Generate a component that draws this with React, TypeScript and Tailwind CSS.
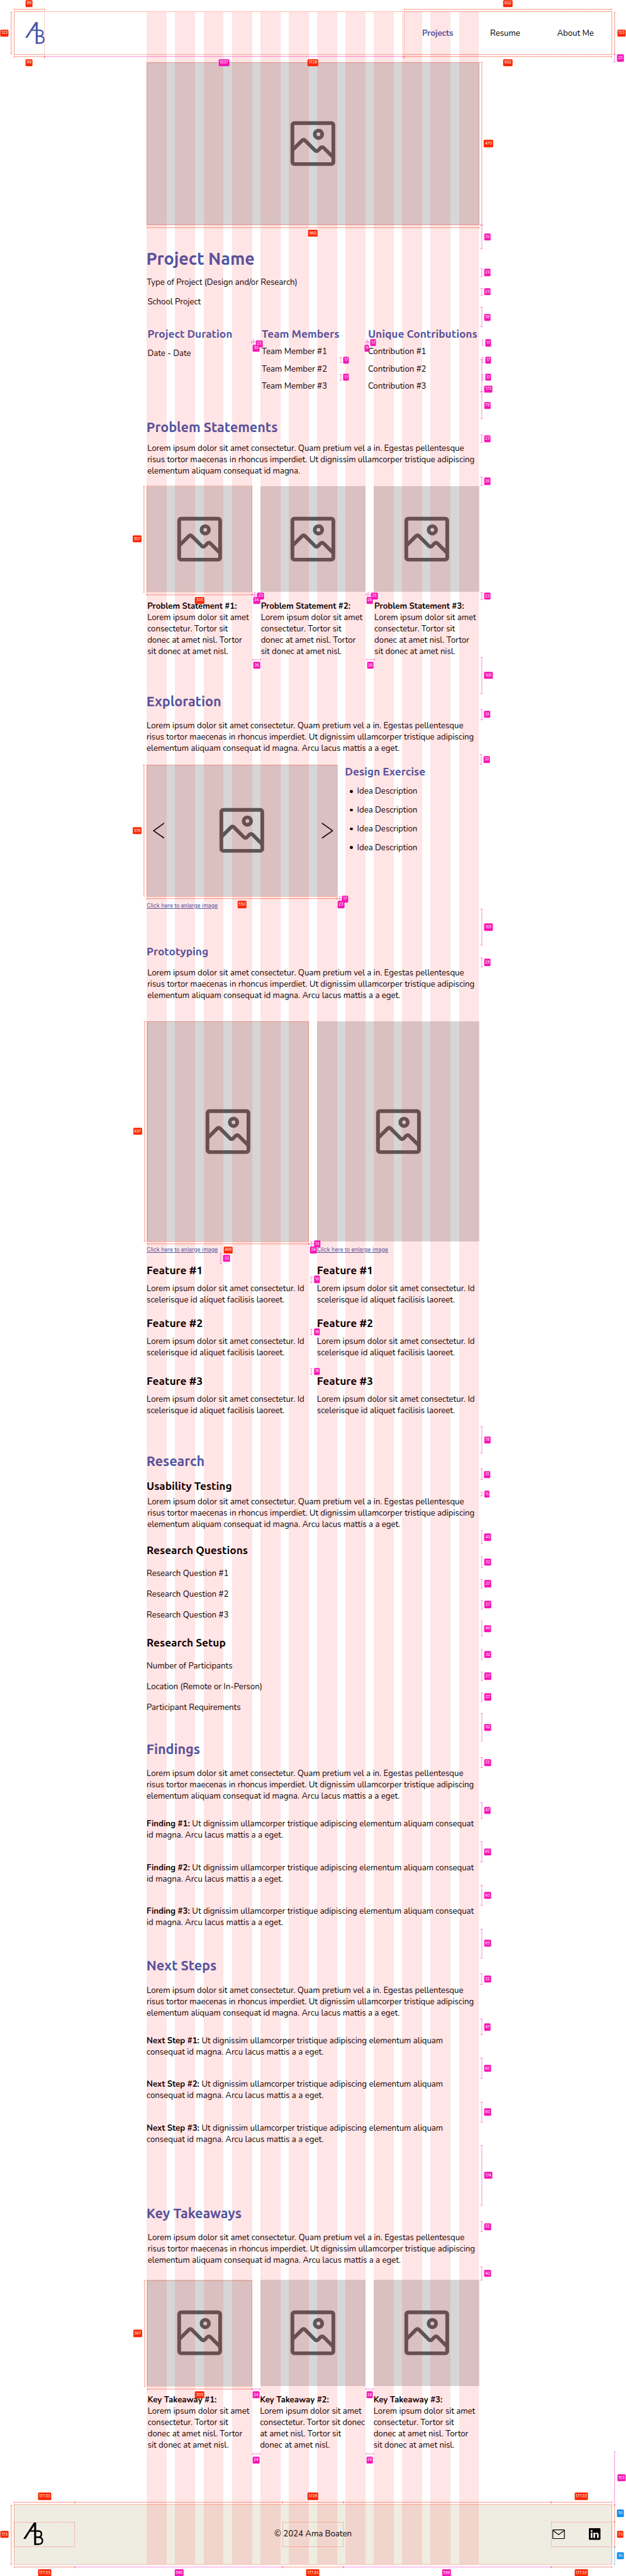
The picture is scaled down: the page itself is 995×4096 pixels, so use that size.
import type { ReactNode } from "react";
import { BsLinkedin } from "react-icons/bs";

const INTRO = [
  "Lorem ipsum dolor sit amet consectetur. Quam pretium vel a in. Egestas pellentesque",
  "risus tortor maecenas in rhoncus imperdiet. Ut dignissim ullamcorper tristique adipiscing",
  "elementum aliquam consequat id magna. Arcu lacus mattis a a eget.",
];
const INTRO_SHORT = [INTRO[0], INTRO[1], "elementum aliquam consequat id magna."];
const CARD = ["Lorem ipsum dolor sit amet", "consectetur. Tortor sit", "donec at amet nisl. Tortor", "sit donec at amet nisl."];
const CARD_WIDE = ["Lorem ipsum dolor sit amet", "consectetur. Tortor sit donec", "at amet nisl. Tortor sit", "donec at amet nisl."];

type Tone = "red" | "pink" | "blue";
const LINE: Record<Tone, string> = { red: "bg-[#f92500]/50", pink: "bg-[#f715b5]/50", blue: "bg-[#0d8ce9]/50" };
const FILL: Record<Tone, string> = { red: "bg-[#fa2600]", pink: "bg-[#f715b5]", blue: "bg-[#0d8ce9]" };

const u = (n: number) => `calc(var(--spacing) * ${n})`;

// [tone, x, top, bottom]
const VERTICAL: [Tone, number, number, number][] = [
  ["red", 32, 34, 157], ["red", 1775, 34, 157], ["pink", 1775, 157, 180],
  ["red", 1391, 180, 650], ["pink", 1391, 650, 720], ["pink", 1391, 775.5, 799], ["pink", 1391, 831.5, 855],
  ["pink", 1391, 887.5, 945.5], ["pink", 1394, 982, 999.5], ["pink", 1394, 1032, 1049], ["pink", 1394, 1082, 1099],
  ["pink", 1391, 1038, 1132], ["pink", 1391, 1132, 1211], ["pink", 1391, 1255.5, 1279], ["pink", 1391, 1377.5, 1403.5],
  ["pink", 731.6, 982, 1005], ["pink", 1061.5, 982, 999], ["pink", 984, 1032, 1049], ["pink", 984, 1082, 1099],
  ["red", 416.5, 1404, 1711], ["pink", 735.6, 1711, 1734], ["pink", 1063.6, 1711, 1734], ["pink", 1391, 1711, 1734],
  ["pink", 1391, 1899, 2004], ["pink", 1391, 2049, 2080], ["pink", 1389, 2178.5, 2210.5],
  ["red", 416.5, 2210.5, 2590], ["pink", 981, 2590, 2607], ["pink", 1391, 2626, 2731], ["pink", 1391, 2767, 2795],
  ["red", 418.5, 2951, 3588], ["pink", 900, 3588, 3601], ["pink", 637.6, 3620, 3652.5],
  ["pink", 898.6, 3688, 3706.5], ["pink", 898.6, 3839.5, 3858.5], ["pink", 898.6, 3953.5, 3972.5],
  ["pink", 1391, 4121.5, 4200], ["pink", 1391, 4244, 4276.5], ["pink", 1391, 4311, 4323.5],
  ["pink", 1392, 4421.5, 4462], ["pink", 1392, 4497.5, 4530], ["pink", 1392, 4563, 4590], ["pink", 1392, 4622.5, 4650],
  ["pink", 1392, 4682.5, 4729], ["pink", 1392, 4764.5, 4796.5], ["pink", 1392, 4830, 4857], ["pink", 1392, 4890, 4917],
  ["pink", 1392, 4949.5, 5032], ["pink", 1391, 5076.5, 5109], ["pink", 1391, 5207.5, 5254.5], ["pink", 1391, 5321, 5381],
  ["pink", 1391, 5446.5, 5507], ["pink", 1391, 5573, 5658], ["pink", 1391, 5702.5, 5735], ["pink", 1391, 5833.5, 5881],
  ["pink", 1391, 5946.5, 6006.5], ["pink", 1391, 6072.5, 6132.5], ["pink", 1391, 6198.5, 6373], ["pink", 1391, 6418, 6450],
  ["pink", 1391, 6549, 6589], ["red", 418, 6589, 6896], ["pink", 1775, 7084, 7237],
  ["red", 32, 7237, 7410], ["red", 1775, 7237, 7287], ["red", 1775, 7287, 7360], ["blue", 1775, 7360, 7410],
];

// [tone, y, left, right]
const HORIZONTAL: [Tone, number, number, number][] = [
  ["red", 27, 40, 129], ["red", 27, 1166, 1768],
  ["red", 164, 40, 129], ["pink", 164, 129, 1166], ["red", 164, 1166, 1768],
  ["red", 657, 424, 1384],
  ["pink", 989, 725, 755], ["pink", 989, 1055, 1064],
  ["red", 1718, 424, 729], ["pink", 1718, 729, 753], ["pink", 1718, 1056, 1080],
  ["pink", 1906, 729, 755], ["pink", 1906, 1057, 1083],
  ["red", 2596.5, 424, 974.5], ["pink", 2596.5, 974.5, 998],
  ["red", 3594.5, 425, 893], ["pink", 3594.5, 893, 916],
  ["red", 6903, 425, 728], ["pink", 6903, 728, 752], ["pink", 6903, 1056, 1080],
  ["pink", 7091, 728, 752], ["pink", 7091, 1056, 1080],
  ["red", 7230, 40, 217], ["red", 7230, 217, 815.5], ["red", 7230, 815.5, 992], ["red", 7230, 992, 1591], ["red", 7230, 1591, 1768],
  ["red", 7417, 40, 217], ["pink", 7417, 217, 815.5], ["red", 7417, 815.5, 992], ["pink", 7417, 992, 1591], ["red", 7417, 1591, 1768],
];

// [tone, centre x, centre y, label]
const BADGES: [Tone, number, number, string][] = [
  ["red", 84, 10, "89"], ["red", 1467, 10, "602"], ["red", 13, 95.5, "123"], ["red", 84, 181, "89"], ["pink", 647, 181, "1037"],
  ["red", 904, 181, "1728"], ["red", 1467, 181, "602"], ["red", 1795, 95.5, "123"], ["pink", 1792, 168, "23"],
  ["red", 1411, 415, "470"], ["pink", 1407.7, 685.5, "70"], ["red", 904, 674, "960"],
  ["pink", 1407.7, 787.5, "23"], ["pink", 1407.7, 843.5, "23"], ["pink", 1407.7, 917, "58"],
  ["pink", 1410, 991, "17"], ["pink", 1410, 1040.5, "17"], ["pink", 1410, 1090.5, "17"], ["pink", 1410.5, 1124.5, "173"],
  ["pink", 1407.7, 1171.5, "79"], ["pink", 1407.7, 1267.5, "23"], ["pink", 1407.7, 1391, "26"],
  ["pink", 748.5, 993.5, "23"], ["pink", 740, 1006, "30"], ["pink", 1078, 990.5, "17"], ["pink", 1059.5, 1006, "9"],
  ["pink", 1000, 1040.5, "17"], ["pink", 1000, 1090.5, "17"],
  ["red", 396, 1557.5, "307"], ["red", 576.8, 1735, "305"], ["pink", 753, 1722, "23"], ["pink", 741, 1735, "24"],
  ["pink", 1081, 1722, "23"], ["pink", 1067.6, 1735, "24"], ["pink", 1407.7, 1722.5, "23"],
  ["pink", 741.7, 1923, "26"], ["pink", 1069.7, 1923, "26"], ["pink", 1411, 1951.5, "105"], ["pink", 1407, 2064.5, "31"],
  ["pink", 1406, 2194.5, "32"], ["red", 396, 2400.5, "379"], ["red", 699, 2614, "550"], ["pink", 996.6, 2598, "17"], ["pink", 985, 2614, "23"],
  ["pink", 1411, 2679, "105"], ["pink", 1407.7, 2781, "28"],
  ["red", 397.6, 3269.5, "637"], ["red", 659, 3612, "468"], ["pink", 916, 3594.5, "13"], ["pink", 905.4, 3612, "24"],
  ["pink", 655, 3636, "32"], ["pink", 915.5, 3697, "18"], ["pink", 915.5, 3849, "18"], ["pink", 915.5, 3963, "18"],
  ["pink", 1407.7, 4161, "78"], ["pink", 1407, 4260.5, "31"], ["pink", 1406.4, 4317.5, "11"],
  ["pink", 1409, 4442, "40"], ["pink", 1409, 4514, "32"], ["pink", 1409, 4576.5, "27"], ["pink", 1409, 4636.5, "27"],
  ["pink", 1409, 4706, "46"], ["pink", 1409, 4781, "32"], ["pink", 1409, 4843.5, "27"], ["pink", 1409, 4903.5, "27"],
  ["pink", 1409, 4991, "82"], ["pink", 1408, 5093, "32"], ["pink", 1408, 5231, "47"], ["pink", 1408, 5351, "60"],
  ["pink", 1408, 5477, "60"], ["pink", 1408, 5615.5, "85"], ["pink", 1408, 5719, "32"], ["pink", 1408, 5857.5, "47"],
  ["pink", 1408, 5977, "60"], ["pink", 1408, 6103, "60"], ["pink", 1410.5, 6286, "174"], ["pink", 1408, 6434, "32"], ["pink", 1408, 6569, "40"],
  ["red", 397.6, 6742.5, "307"], ["red", 576.8, 6920, "303"], ["pink", 739.7, 6920, "24"], ["pink", 1067.6, 6920, "24"],
  ["pink", 739.7, 7108, "24"], ["pink", 1067.6, 7108, "24"], ["pink", 1795, 7160, "153"],
  ["red", 129, 7213, "177.33"], ["red", 904, 7213, "1728"], ["red", 1679, 7213, "177.33"],
  ["red", 13, 7323.5, "173"], ["blue", 1792, 7262, "50"], ["red", 1792, 7323.5, "73"], ["blue", 1792, 7385, "50"],
  ["red", 129, 7434, "177.33"], ["pink", 517, 7434, "598"], ["red", 904, 7434, "177.33"], ["pink", 1290, 7434, "598"], ["red", 1679, 7434, "177.33"],
];

// [dotted, left, top, right, bottom]
const OUTLINES: [boolean, number, number, number, number][] = [
  [false, 40, 34, 1768, 157], [true, 40, 34, 129, 157], [true, 1166, 34, 1768, 157],
  [false, 424, 180, 1384, 650], [true, 424, 1404, 729, 1711], [false, 424, 2210, 975, 2590],
  [false, 425, 2951, 893, 3588], [true, 425, 6589, 728, 6896],
  [false, 40, 7237, 1768, 7410], [true, 40, 7287, 217, 7360], [true, 815.5, 7287, 992, 7360], [true, 1591, 7287, 1768, 7360],
];

function Measurements() {
  return (
    <div className="pointer-events-none absolute inset-0">
      {OUTLINES.map(([dotted, l, t, r, b], i) => (
        <div
          key={i}
          className={dotted ? "absolute border border-dotted border-[#f92500]/45" : "absolute border border-[#f92500]/30"}
          style={{ left: u(l), top: u(t - 0.5), width: u(r - l), height: u(b - t + 1) }}
        />
      ))}
      {VERTICAL.map(([tone, x, a, b], i) => (
        <div key={i} className="absolute flex w-6 -translate-x-1/2 flex-col items-center" style={{ left: u(x), top: u(a), height: u(b - a) }}>
          <div className={`h-px w-full ${LINE[tone]}`} />
          <div className={`w-px grow ${LINE[tone]}`} />
          <div className={`h-px w-full ${LINE[tone]}`} />
        </div>
      ))}
      {HORIZONTAL.map(([tone, y, a, b], i) => (
        <div key={i} className="absolute flex h-6 -translate-y-1/2 items-center" style={{ top: u(y), left: u(a), width: u(b - a) }}>
          <div className={`h-full w-px ${LINE[tone]}`} />
          <div className={`h-px grow ${LINE[tone]}`} />
          <div className={`h-full w-px ${LINE[tone]}`} />
        </div>
      ))}
      {BADGES.map(([tone, x, y, label], i) => (
        <div
          key={i}
          className={`absolute flex h-20.5 -translate-x-1/2 -translate-y-1/2 items-center justify-center rounded-[1.5px] px-3 font-[Inter,sans-serif] text-[6.05px] leading-none text-white ${FILL[tone]}`}
          style={{ left: u(x), top: u(y) }}
        >
          {label}
        </div>
      ))}
    </div>
  );
}

function ColumnGrid() {
  return (
    <div className="pointer-events-none absolute top-34 bottom-34 left-424 flex w-960 gap-24">
      {Array.from({ length: 12 }, (_, i) => (
        <div key={i} className="w-58 bg-[#ff0000]/10" />
      ))}
    </div>
  );
}

function Logo({ className }: { className: string }) {
  return (
    <svg viewBox="0 0 170 189" preserveAspectRatio="none" className={className}>
      <path fill="currentColor" fillRule="evenodd" d="M90 0H109V189H92V77H57L20 137H0ZM92 28L66 65H92Z" />
      <path fill="none" stroke="currentColor" strokeWidth="13" d="M104 71.5H124C146 71.5 154 82 154 96C154 111 144 123 122 123H104M122 123C152 123 162.500 138 162.500 153C162.500 172 148 182.500 128 182.500H104" />
    </svg>
  );
}

function Picture({ className, children }: { className: string; children?: ReactNode }) {
  return (
    <div className={`relative flex items-center justify-center bg-[#d6d6d6] ${className}`}>
      <svg viewBox="0 0 24 24" className="size-172" fill="none" stroke="#585858" strokeWidth="1.5">
        <rect x="3.75" y="3.75" width="16.5" height="16.5" rx="0.75" />
        <circle cx="14.25" cy="8.25" r="1.5" />
        <path d="M3.75 14.65L7.72 10.68a.75.75 0 0 1 1.06 0L12.94 14.84a.75.75 0 0 0 1.06 0L15.2 13.63a.75.75 0 0 1 1.06 0L20.25 17.62" />
      </svg>
      {children}
    </div>
  );
}

function Text({ lines, lead, className = "" }: { lines: string[]; lead?: string; className?: string }) {
  return (
    <p className={`whitespace-nowrap ${className}`}>
      {lines.map((line, i) => (
        <span key={i} className="block">
          {i === 0 && lead ? <b className="font-bold">{lead} </b> : null}
          {line}
        </span>
      ))}
    </p>
  );
}

function H2({ className, children }: { className: string; children: string }) {
  return <h2 className={`-ml-1 font-[Ubuntu,sans-serif] text-[21.6px] leading-45 font-bold whitespace-nowrap text-[#4a59a9] ${className}`}>{children}</h2>;
}

function H3({ className = "", dark = false, children }: { className?: string; dark?: boolean; children: string }) {
  return (
    <h3 className={`font-[Ubuntu,sans-serif] text-[17.3px] leading-36 font-bold whitespace-nowrap ${dark ? "text-black" : "text-[#4a59a9]"} ${className}`}>
      {children}
    </h3>
  );
}

function EnlargeLink({ className }: { className: string }) {
  return (
    <a className={`block w-fit font-[Inter,sans-serif] text-[8.75px] leading-19.25 whitespace-nowrap text-[#4a59a9] underline decoration-[1px] underline-offset-[1px] ${className}`}>
      Click here to enlarge image
    </a>
  );
}

function Card({ title, lines, width, inset }: { title: string; lines: string[]; width: string; inset: string }) {
  return (
    <div className={width}>
      <Picture className="h-307 w-full" />
      <div className={`mt-24 ${inset}`}>
        <b className="block font-bold whitespace-nowrap">{title}</b>
        <Text lines={lines} />
      </div>
    </div>
  );
}

function Prototype() {
  return (
    <div className="w-468">
      <Picture className="h-637 w-full" />
      <EnlargeLink className="mt-13.5" />
      {["mt-32.25", "mt-33", "mt-48.5"].map((gap, i) => (
        <div key={gap} className={`-ml-0.5 ${gap}`}>
          <H3 dark>{`Feature #${i + 1}`}</H3>
          <Text className="mt-18" lines={["Lorem ipsum dolor sit amet consectetur. Id", "scelerisque id aliquet facilisis laoreet."]} />
        </div>
      ))}
    </div>
  );
}

export default function App() {
  return (
    <div className="relative h-[4096px] w-[995px] overflow-hidden bg-white font-[Nunito,sans-serif] text-[13.2px] leading-32.75 text-black [--spacing:0.5503px]">
      <header className="mx-40 mt-34 flex h-123 justify-between">
        <div className="flex items-center pl-32.5">
          <Logo className="h-63 w-56.5 text-[#4a59a9]" />
        </div>
        <nav className="flex w-602 items-center justify-between px-53">
          <a className="font-bold text-[#4a59a9]">Projects</a>
          <a>Resume</a>
          <a>About Me</a>
        </nav>
      </header>

      <main className="mt-23 ml-424 w-960">
        <Picture className="h-470 w-full" />
        <h1 className="mt-70.5 -ml-1.5 font-[Ubuntu,sans-serif] text-[27px] leading-56 font-bold whitespace-nowrap text-[#4a59a9]">Project Name</h1>
        <p className="mt-23">Type of Project (Design and/or Research)</p>
        <p className="mt-23.25 ml-2">School Project</p>

        <div className="mt-58.25 flex h-186 pl-2">
          <div className="w-330">
            <H3>Project Duration</H3>
            <p className="mt-23">Date - Date</p>
          </div>
          <div className="w-307">
            <H3>Team Members</H3>
            {[1, 2, 3].map((n) => <p key={n} className="mt-17.25">Team Member #{n}</p>)}
          </div>
          <div>
            <H3>Unique Contributions</H3>
            {[1, 2, 3].map((n) => <p key={n} className="mt-17.25">Contribution #{n}</p>)}
          </div>
        </div>

        <H2 className="mt-79">Problem Statements</H2>
        <Text className="mt-23 ml-1.5" lines={INTRO_SHORT} />
        <div className="mt-26.25 flex justify-between">
          <Card title="Problem Statement #1:" lines={CARD} width="w-305" inset="pl-1.5" />
          <Card title="Problem Statement #2:" lines={CARD} width="w-304" inset="pl-1" />
          <Card title="Problem Statement #3:" lines={CARD} width="w-304" inset="pl-1.5" />
        </div>

        <H2 className="mt-105.75">Exploration</H2>
        <Text className="mt-31 -ml-0.5" lines={INTRO} />
        <div className="mt-31.75 flex gap-24">
          <div className="w-550.5">
            <Picture className="h-379.5 w-full">
              <svg viewBox="0 0 34 46" className="absolute left-17 h-46 w-34" fill="none" stroke="#000" strokeWidth="3" strokeLinecap="round" strokeLinejoin="round">
                <path d="M32 2L2 23.500L31.500 44" />
              </svg>
              <svg viewBox="0 0 34 46" className="absolute right-12 h-46 w-34" fill="none" stroke="#000" strokeWidth="3" strokeLinecap="round" strokeLinejoin="round">
                <path d="M2 2L32 23.500L2.500 44" />
              </svg>
            </Picture>
            <EnlargeLink className="mt-17.5" />
          </div>
          <div className="pt-1.5">
            <H3 className="-ml-2">Design Exercise</H3>
            <ul className="mt-22.5 ml-12.5 flex flex-col gap-21.5">
              {[0, 1, 2, 3].map((n) => (
                <li key={n} className="flex items-center gap-12">
                  <span className="size-8.5 rounded-full bg-black" />
                  Idea Description
                </li>
              ))}
            </ul>
          </div>
        </div>

        <H3 className="mt-105 -ml-0.5">Prototyping</H3>
        <Text className="mt-27.75 ml-1.5" lines={INTRO} />
        <div className="mt-57.25 flex justify-between">
          <Prototype />
          <Prototype />
        </div>

        <H2 className="mt-107.5">Research</H2>
        <H3 dark className="mt-31 -ml-0.5">Usability Testing</H3>
        <Text className="mt-11.5 ml-1.5" lines={INTRO} />
        <H3 dark className="mt-40.25 -ml-0.5">Research Questions</H3>
        <div className="mt-32 -ml-0.5 flex flex-col gap-27.25">
          {[1, 2, 3].map((n) => <p key={n}>Research Question #{n}</p>)}
        </div>
        <H3 dark className="mt-46.25 -ml-0.5">Research Setup</H3>
        <div className="mt-32 -ml-0.5 flex flex-col gap-27.25">
          <p>Number of Participants</p>
          <p>Location (Remote or In-Person)</p>
          <p>Participant Requirements</p>
        </div>

        <H2 className="mt-82.25">Findings</H2>
        <Text className="mt-32 -ml-0.5" lines={INTRO} />
        <div className="mt-47.25 -ml-0.5 flex flex-col gap-60.75">
          {[1, 2, 3].map((n) => (
            <Text key={n} lead={`Finding #${n}:`} lines={["Ut dignissim ullamcorper tristique adipiscing elementum aliquam consequat", "id magna. Arcu lacus mattis a a eget."]} />
          ))}
        </div>

        <H2 className="mt-85.5">Next Steps</H2>
        <Text className="mt-32 -ml-0.5" lines={INTRO} />
        <div className="mt-47.75 -ml-0.5 flex flex-col gap-60.75">
          {[1, 2, 3].map((n) => (
            <Text key={n} lead={`Next Step #${n}:`} lines={["Ut dignissim ullamcorper tristique adipiscing elementum aliquam", "consequat id magna. Arcu lacus mattis a a eget."]} />
          ))}
        </div>

        <H2 className="mt-174">Key Takeaways</H2>
        <Text className="mt-32 ml-2.75" lines={INTRO} />
        <div className="mt-40.25 flex justify-between">
          <Card title="Key Takeaway #1:" lines={CARD} width="w-304" inset="pl-2.5" />
          <Card title="Key Takeaway #2:" lines={CARD_WIDE} width="w-304" inset="-ml-1.25" />
          <Card title="Key Takeaway #3:" lines={CARD} width="w-304" inset="-ml-1.25" />
        </div>
      </main>

      <footer className="mx-40 mt-153.25 grid h-173 grid-cols-3 items-center bg-[#efece2]">
        <div className="pl-27">
          <Logo className="h-65 w-58 text-black" />
        </div>
        <p className="text-center">© 2024 Ama Boaten</p>
        <div className="flex items-center justify-end gap-70 pr-33">
          <svg viewBox="0 0 36 28" className="h-28 w-36" fill="none" stroke="#000" strokeWidth="2.200">
            <rect x="1.25" y="1.25" width="33.500" height="25.500" rx="1.500" />
            <path d="M2 3L18 15L34 3" />
          </svg>
          <BsLinkedin className="size-33.5" />
        </div>
      </footer>

      <ColumnGrid />
      <Measurements />
    </div>
  );
}
